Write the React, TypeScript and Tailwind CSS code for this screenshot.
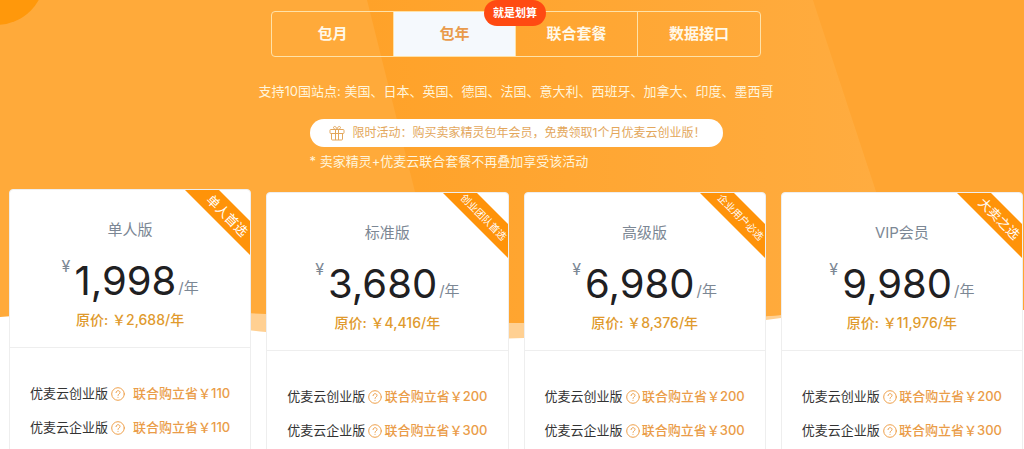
import { useState } from "react";

type Plan = {
  name: string;
  ribbon: string;
  price: string;
  original: string;
  savings: { label: string; amount: string }[];
};

const tabs = ["包月", "包年", "联合套餐", "数据接口"];

const plans: Plan[] = [
  {
    name: "单人版",
    ribbon: "单人首选",
    price: "1,998",
    original: "2,688",
    savings: [
      { label: "优麦云创业版", amount: "110" },
      { label: "优麦云企业版", amount: "110" },
    ],
  },
  {
    name: "标准版",
    ribbon: "创业团队首选",
    price: "3,680",
    original: "4,416",
    savings: [
      { label: "优麦云创业版", amount: "200" },
      { label: "优麦云企业版", amount: "300" },
    ],
  },
  {
    name: "高级版",
    ribbon: "企业用户必选",
    price: "6,980",
    original: "8,376",
    savings: [
      { label: "优麦云创业版", amount: "200" },
      { label: "优麦云企业版", amount: "300" },
    ],
  },
  {
    name: "VIP会员",
    ribbon: "大卖之选",
    price: "9,980",
    original: "11,976",
    savings: [
      { label: "优麦云创业版", amount: "200" },
      { label: "优麦云企业版", amount: "300" },
    ],
  },
];

function Backdrop() {
  return (
    <svg
      className="absolute inset-x-0 top-0 -z-10 h-[340px] w-full"
      viewBox="0 0 1024 340"
      preserveAspectRatio="none"
      aria-hidden="true"
    >
      <defs>
        <linearGradient id="beam" x1="0" y1="0" x2="1" y2="0">
          <stop offset="0" stopColor="#ffa229" />
          <stop offset="1" stopColor="#ffad42" />
        </linearGradient>
        <clipPath id="wave">
          <path d="M0 0H1024V310Q900 306 781 315Q640 327 524 323Q400 321 266 314Q120 307 0 317Z" />
        </clipPath>
      </defs>
      <path
        d="M150 312Q220 328 266 332Q390 342 524 338Q660 334 781 318L781 300H150Z"
        fill="#ffd092"
      />
      <g clipPath="url(#wave)">
        <path d="M0 0H1024V340H0Z" fill="#ffaa3a" />
        <path d="M367 0H813L925 340H452Z" fill="url(#beam)" />
        <path d="M813 0H1024V340H925Z" fill="#ffa532" />
        <circle cx="-4" cy="-24" r="49" fill="#ff980b" />
      </g>
    </svg>
  );
}

function GiftIcon() {
  return (
    <svg
      className="h-4 w-4 shrink-0"
      viewBox="0 0 16 16"
      fill="none"
      stroke="#e3a75c"
      strokeWidth="1"
      aria-hidden="true"
    >
      <rect x="1" y="4.5" width="14" height="4" rx="0.8" />
      <path d="M2.5 8.5V14a1 1 0 0 0 1 1h9a1 1 0 0 0 1-1V8.500M6.500 4.500V15M9.500 4.500V15" />
      <path d="M8 4.500C6.500 4.500 4.500 4 4.500 2.500S7.500.8 8 4.500C8.500.8 11.500 1 11.500 2.500S9.500 4.500 8 4.500Z" />
    </svg>
  );
}

function HelpIcon() {
  return (
    <svg
      className="h-[14px] w-[14px]"
      viewBox="0 0 14 14"
      fill="none"
      stroke="currentColor"
      strokeWidth="1"
      strokeLinecap="round"
      aria-hidden="true"
    >
      <circle cx="7" cy="7" r="6.300" />
      <path d="M5 5.600C5 3 9 3 9 5.500C9 6.900 7 6.900 7 8.400M7 10.300V10.400" />
    </svg>
  );
}

function PlanCard({ plan, raised }: { plan: Plan; raised: boolean }) {
  // Long ribbon labels drop to a smaller size so they fit across the corner
  const ribbonSize = plan.ribbon.length > 4 ? "text-[10px]" : "pl-1 text-[13px]";

  return (
    <article
      className={`relative overflow-hidden rounded border border-[#eee] bg-white pb-8 ${
        raised ? "" : "mt-[3px]"
      }`}
    >
      <div
        className={`absolute top-3 -right-[26px] h-6 w-[100px] rotate-45 bg-[#ff9309] text-center leading-6 whitespace-nowrap text-white ${ribbonSize}`}
      >
        {plan.ribbon}
      </div>

      <header className="flex h-[158px] flex-col items-center border-b border-[#eee] pt-[30px]">
        <h2 className="text-[15px] leading-5 text-[#7c8794]">{plan.name}</h2>
        <p className="mt-3 flex h-12 text-[#7c8794]">
          <span className="pt-1 text-base leading-5">¥</span>
          <span className="ml-1 text-[40px] leading-[58px] text-[#1f2022]">{plan.price}</span>
          <span className="ml-0.5 self-end text-[15px] leading-6">/年</span>
        </p>
        <p className="mt-2 text-sm leading-6 font-medium text-[#e09a2d]">
          原价: ￥{plan.original}/年
        </p>
      </header>

      <ul className="space-y-[10px] px-5 pt-[34px]">
        {plan.savings.map((s) => (
          <li
            key={s.label}
            className="flex h-6 items-center text-[13px] whitespace-nowrap text-[#333]"
          >
            <span>{s.label}</span>
            <button
              type="button"
              aria-label={`${s.label}说明`}
              className="ml-[3px] shrink-0 text-[#eea04b]"
            >
              <HelpIcon />
            </button>
            <span className="ml-auto font-medium text-[#ea9c48]">联合购立省￥{s.amount}</span>
          </li>
        ))}
      </ul>
    </article>
  );
}

export default function App() {
  const [active, setActive] = useState("包年");

  return (
    <main className="relative isolate overflow-hidden bg-white pr-px pl-[9px] font-['Inter','Noto_Sans_CJK_SC',sans-serif]">
      <Backdrop />

      <div className="flex flex-col items-center pt-[11px] text-white">
        <div
          role="tablist"
          className="grid h-[46px] w-[490px] grid-cols-4 divide-x divide-[#ffe2a8] rounded border border-[#ffe2a8]"
        >
          {tabs.map((tab) => (
            <button
              key={tab}
              type="button"
              role="tab"
              aria-selected={active === tab}
              onClick={() => setActive(tab)}
              className={`relative text-[15px] font-bold ${
                active === tab ? "bg-[#f5f9fd] text-[#e99b4c]" : "text-[#fff8e8]"
              }`}
            >
              {tab}
              {tab === "包年" && (
                <span className="absolute -top-3 -right-[31px] z-10 h-[26px] w-[62px] rounded-full bg-[#ff4a12] text-center text-[11px] leading-[26px] text-white">
                  就是划算
                </span>
              )}
            </button>
          ))}
        </div>

        <p className="mt-6 text-[13px] leading-5 text-[#fff5dc]">
          支持10国站点: 美国、日本、英国、德国、法国、意大利、西班牙、加拿大、印度、墨西哥
        </p>

        <div className="mt-[18px]">
          <p className="flex h-7 w-[413px] items-center gap-2 rounded-full bg-white pl-[19px] text-xs whitespace-nowrap text-[#e3a75c]">
            <GiftIcon />
            限时活动：购买卖家精灵包年会员，免费领取1个月优麦云创业版！
          </p>
          <p className="mt-1 text-[13px] leading-5 text-[#fff5dc]">
            * 卖家精灵+优麦云联合套餐不再叠加享受该活动
          </p>
        </div>
      </div>

      <section className="mt-[18px] grid grid-cols-4 gap-[15px]">
        {plans.map((plan, i) => (
          <PlanCard key={plan.name} plan={plan} raised={i === 0} />
        ))}
      </section>
    </main>
  );
}
